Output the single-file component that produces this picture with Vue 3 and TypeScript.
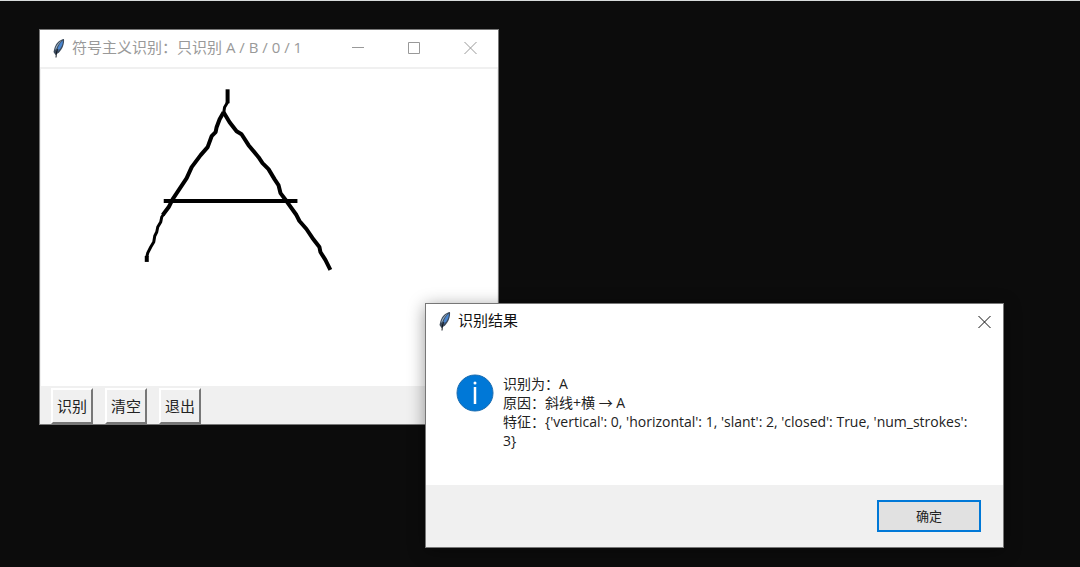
<script setup lang="ts">
import { ref } from 'vue'

type Point = [number, number]

interface Stroke {
  width: number
  points: Point[]
}

const strokes = ref<Stroke[]>([
  { width: 4, points: [[186, 20], [186, 34]] },
  { width: 3, points: [[186, 33], [183, 38], [182, 44]] },
  {
    width: 4,
    points: [
      [182, 43], [178, 50], [175, 58], [174, 63], [170, 67], [166, 78], [159, 86], [150, 98],
      [145, 109], [137, 121], [131, 130], [127, 138], [121, 146],
    ],
  },
  {
    width: 3,
    points: [
      [122, 145], [120, 148], [119, 153], [116, 158], [115, 163], [113, 167], [112, 173],
      [109, 178], [106, 184], [105, 188],
    ],
  },
  { width: 4, points: [[105, 187], [105, 193]] },
  {
    width: 4,
    points: [
      [182, 43], [188, 53], [195, 62], [200, 65], [207, 76], [217, 88], [221, 94], [227, 100],
      [233, 110], [237, 116], [239, 124], [245, 132], [255, 146], [258, 152], [265, 160],
      [271, 169], [278, 178], [279, 183], [284, 191], [289, 201],
    ],
  },
  { width: 4, points: [[122, 132], [256, 132]] },
])

const toPoints = (points: Point[]): string => points.map((p) => p.join(',')).join(' ')

const tools = ['识别', '清空', '退出']

const resultLines = [
  '识别为：A',
  '原因：斜线+横 → A',
  "特征：{'vertical': 0, 'horizontal': 1, 'slant': 2, 'closed': True, 'num_strokes':\n3}",
]
</script>

<template>
  <main class="desktop">
    <section class="window recognizer" aria-label="符号主义识别">
      <header class="titlebar inactive">
        <svg class="feather" viewBox="0 0 14 20" aria-hidden="true">
          <path d="M12 1C8 1.500 4 5 2.500 10L1.500 14L3.500 17L7 14.500C10.500 11 12.500 6 12 1Z" fill="#3b4a5c" />
          <path d="M11 2.500C8 4.500 6 8 5 13L6.500 12.500C9.500 9.500 11 6 11 2.500Z" fill="#4a86d0" />
          <path d="M10 2.500C6.500 4 4 7.500 3 12L4.500 10.500C5.500 7.500 7.500 4.500 10 2.500Z" fill="#9fb6c8" />
          <path d="M6 11L4.500 14L4 19.500" fill="none" stroke="#111820" stroke-width="1" />
        </svg>
        <h1 class="title">符号主义识别：只识别 A / B / 0 / 1</h1>
        <div class="controls">
          <button class="control" type="button" aria-label="最小化">
            <svg viewBox="0 0 13 13"><path d="M0 5.500H12" /></svg>
          </button>
          <button class="control" type="button" aria-label="最大化">
            <svg viewBox="0 0 13 13"><path d="M.5 .5H11.500V11.500H.5Z" /></svg>
          </button>
          <button class="control" type="button" aria-label="关闭">
            <svg viewBox="0 0 13 13"><path d="M.5 0L12.500 12M12.500 0L.5 12" /></svg>
          </button>
        </div>
      </header>
      <div class="board">
        <svg class="drawing" width="455" height="317" viewBox="0 0 455 317" role="img" aria-label="手写笔迹">
          <polyline
            v-for="(stroke, i) in strokes"
            :key="i"
            :points="toPoints(stroke.points)"
            :stroke-width="stroke.width"
          />
        </svg>
      </div>
      <div class="toolbar">
        <button v-for="tool in tools" :key="tool" class="tool" type="button">{{ tool }}</button>
      </div>
    </section>

    <section class="window dialog" role="dialog" aria-labelledby="dialog-title">
      <header class="titlebar">
        <svg class="feather" viewBox="0 0 14 20" aria-hidden="true">
          <path d="M12 1C8 1.500 4 5 2.500 10L1.500 14L3.500 17L7 14.500C10.500 11 12.500 6 12 1Z" fill="#3b4a5c" />
          <path d="M11 2.500C8 4.500 6 8 5 13L6.500 12.500C9.500 9.500 11 6 11 2.500Z" fill="#4a86d0" />
          <path d="M10 2.500C6.500 4 4 7.500 3 12L4.500 10.500C5.500 7.500 7.500 4.500 10 2.500Z" fill="#9fb6c8" />
          <path d="M6 11L4.500 14L4 19.500" fill="none" stroke="#111820" stroke-width="1" />
        </svg>
        <h2 id="dialog-title" class="title">识别结果</h2>
        <div class="controls">
          <button class="control narrow" type="button" aria-label="关闭">
            <svg viewBox="0 0 13 13"><path d="M.5 0L12.500 12M12.500 0L.5 12" /></svg>
          </button>
        </div>
      </header>
      <div class="content">
        <svg class="info" viewBox="0 0 38 38" aria-hidden="true">
          <circle cx="19" cy="19" r="18" fill="#0078d7" stroke="#1a6cb0" stroke-width="1" />
          <circle cx="19" cy="9" r="1.500" fill="#fff" />
          <path d="M19 13V30" stroke="#fff" stroke-width="2.500" />
        </svg>
        <div class="message">
          <p v-for="line in resultLines" :key="line">{{ line }}</p>
        </div>
      </div>
      <footer class="actions">
        <button class="confirm" type="button">确定</button>
      </footer>
    </section>
  </main>
</template>

<style>
body {
  margin: 0;
  background: #0c0c0c;
}
</style>

<style scoped>
.desktop {
  position: relative;
  box-sizing: border-box;
  min-height: 100vh;
  overflow: hidden;
  border-top: 1px solid #d8dcdc;
  background: #0c0c0c;
  font-family: "Open Sans", "Noto Sans CJK SC", sans-serif;
}

.window {
  position: absolute;
  box-sizing: border-box;
  display: flex;
  flex-direction: column;
  border: 1px solid #777;
  background: #fff;
}

.recognizer {
  top: 28px;
  left: 39px;
  right: 581px;
  min-width: 400px;
}

.dialog {
  top: 302px;
  left: 425px;
  right: 76px;
  min-width: 400px;
  box-shadow: 0 3px 16px rgba(0, 0, 0, 0.4);
}

.titlebar {
  display: flex;
  align-items: center;
  height: 36px;
  padding-left: 12px;
  color: #111;
}

.inactive {
  height: 37px;
  border-bottom: 2px solid #f0f0f0;
  color: #999;
}

.feather {
  flex: none;
  width: 14px;
  height: 20px;
  margin-bottom: 2px;
}

.title {
  flex: 1;
  margin: 0 0 4px 6px;
  font-size: 15px;
  font-weight: 400;
  line-height: 20px;
  white-space: nowrap;
}

.controls {
  display: flex;
  height: 100%;
}

.control {
  display: flex;
  align-items: center;
  justify-content: center;
  width: 56px;
  padding: 0;
  border: 0;
  background: transparent;
  color: inherit;
}

.narrow {
  width: 38px;
}

.control svg {
  width: 13px;
  height: 13px;
  fill: none;
  stroke: currentColor;
  stroke-width: 1;
}

.board {
  padding: 0 1px;
  background: #fff;
  border: solid #f0f0f0;
  border-width: 0 1px;
}

.drawing {
  display: block;
  max-width: 100%;
}

.drawing polyline {
  fill: none;
  stroke: #000;
  stroke-linejoin: bevel;
}

.toolbar {
  display: flex;
  gap: 12px;
  padding: 2px 11px 0;
  background: #f0f0f0;
}

.tool {
  width: 42px;
  height: 36px;
  padding: 0;
  border: 2px solid;
  border-color: #fff #777 #777 #fff;
  background: #f0f0f0;
  color: #222;
  font: 15px/20px "Open Sans", "Noto Sans CJK SC", sans-serif;
}

.content {
  display: flex;
  align-items: flex-start;
  gap: 9px;
  padding: 34px 34px 35px 30px;
}

.info {
  flex: none;
  width: 38px;
  height: 38px;
}

.message {
  flex: 1;
  color: #222;
  font-size: 14px;
  line-height: 19px;
}

.message p {
  margin: 0;
  white-space: pre-line;
}

.actions {
  display: flex;
  justify-content: flex-end;
  padding: 15px 22px;
  background: #f0f0f0;
}

.confirm {
  width: 104px;
  height: 32px;
  padding: 0;
  border: 2px solid #0078d7;
  background: #e1e1e1;
  color: #222;
  font: 13px/20px "Open Sans", "Noto Sans CJK SC", sans-serif;
}
</style>
